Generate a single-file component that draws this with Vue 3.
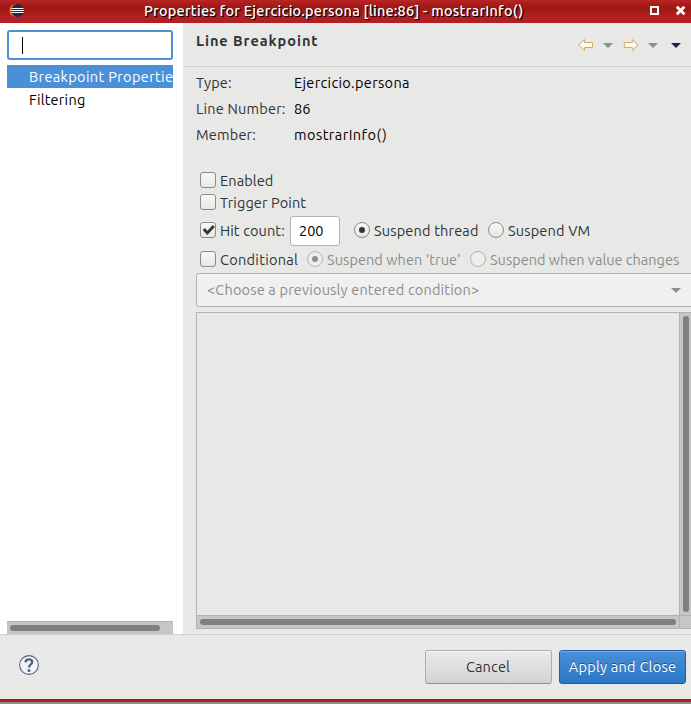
<script setup>
import { ref } from 'vue'

const pages = ['Breakpoint Properties', 'Filtering']
const selected = ref(0)
const info = [
  { label: 'Type:', value: 'Ejercicio.persona', cls: 'v-type', lcls: 'l-type' },
  { label: 'Line Number:', value: '86', cls: 'v-line', lcls: 'l-line' },
  { label: 'Member:', value: 'mostrarInfo()', cls: 'v-member', lcls: 'l-member' }
]
</script>

<template>
  <div class="dialog">
    <header class="titlebar">
      <svg class="logo" width="16" height="16" viewBox="0 0 16 16">
        <circle cx="6.8" cy="7.5" r="6.2" fill="#f7941e" />
        <circle cx="8.4" cy="7.5" r="6.5" fill="#2c2255" />
        <path d="M2.3 5.5h12.2M2 7.5h13M2.3 9.5h12.2" stroke="#fff" stroke-width="1.2" />
      </svg>
      <h1 class="t-title">Properties for Ejercicio.persona [line:86] - mostrarInfo()</h1>
      <svg class="winbtns" width="40" height="16" viewBox="0 0 40 16">
        <rect x="3" y="4" width="7" height="7" fill="none" stroke="#fff" stroke-width="2" />
        <path d="M28.8 3.7l7.6 7.6M36.4 3.7l-7.6 7.6" stroke="#fff" stroke-width="2.8" />
      </svg>
    </header>

    <main class="content">
      <aside class="side">
        <div class="search"><span class="caret"></span></div>
        <ul class="tree">
          <li v-for="(p, i) in pages" :key="p" :class="{ active: i === selected }" @click="selected = i">
            <span :class="'t-nav' + i">{{ p }}</span>
          </li>
        </ul>
        <div class="side-scroll"><span class="thumb"></span></div>
      </aside>

      <section class="page">
        <div class="page-head">
          <h2 class="t-head">Line Breakpoint</h2>
          <svg class="nav" width="108" height="20" viewBox="0 0 108 20">
            <g fill="#fff8e6" stroke="#d0a970" stroke-width="1">
              <path d="M.8 10L6.5 4.5V7.5H14.5V12.5H6.5V15.5Z" />
              <path d="M60 10L54.3 4.5V7.5H46.3V12.5H54.3V15.5Z" />
            </g>
            <path d="M25 8h10l-5 5zM70 8h10l-5 5z" fill="#8b908f" />
            <path d="M93 8h10l-5 5z" fill="#2d1b4b" />
          </svg>
        </div>

        <dl class="info">
          <template v-for="row in info" :key="row.label">
            <dt><span :class="row.lcls">{{ row.label }}</span></dt>
            <dd><span :class="row.cls">{{ row.value }}</span></dd>
          </template>
        </dl>

        <div class="row r-enabled"><i class="check"></i><span class="t-enabled">Enabled</span></div>
        <div class="row r-trigger"><i class="check"></i><span class="t-trigger">Trigger Point</span></div>
        <div class="row r-hit">
          <i class="check">
            <svg width="16" height="16" viewBox="0 0 16 16"><path d="M3.8 7L7.3 11L13.8 4" fill="none" stroke="#2e3436" stroke-width="2.8" /></svg>
          </i>
          <span class="w-hit t-hit">Hit count:</span>
          <div class="count"><span class="t-count">200</span></div>
          <i class="radio on"></i><span class="w-thread t-thread">Suspend thread</span>
          <i class="radio"></i><span class="t-vm">Suspend VM</span>
        </div>
        <div class="row r-cond">
          <i class="check"></i><span class="w-cond t-cond">Conditional</span>
          <i class="radio on off"></i><span class="w-true dim t-true">Suspend when 'true'</span>
          <i class="radio off"></i><span class="dim t-changes">Suspend when value changes</span>
        </div>

        <div class="combo">
          <span class="t-choose">&lt;Choose a previously entered condition&gt;</span>
          <svg width="10" height="5" viewBox="0 0 10 5"><path d="M0 0h10L5 5z" fill="#8b908f" /></svg>
        </div>

        <div class="editor">
          <div class="canvas"></div>
          <div class="vbar"><span></span></div>
          <div class="hbar"><span></span></div>
          <div class="corner"></div>
        </div>
      </section>
    </main>

    <footer class="footer">
      <svg width="22" height="22" viewBox="0 0 22 22">
        <circle cx="11" cy="11" r="9.4" fill="#f4f4f4" stroke="#526388" stroke-width="1.1" />
        <path d="M7.5 8.4C7.6 4.4 14.4 4.5 14.2 8C14.1 10.5 11 10.3 11 13.6" fill="none" stroke="#526388" stroke-width="2.4" />
        <circle cx="11" cy="16.4" r="1.5" fill="#526388" />
      </svg>
      <button class="btn cancel"><span class="t-cancel">Cancel</span></button>
      <button class="btn primary"><span class="t-apply">Apply and Close</span></button>
    </footer>
    <div class="edge"></div>
    <div class="desktop"></div>
  </div>
</template>

<style>
body { margin: 0; overflow: hidden; }
</style>

<style scoped>
* { box-sizing: border-box; }
.dialog {
  width: 691px; height: 704px; overflow: hidden;
  display: flex; flex-direction: column;
  background: #e8e8e6; color: #2e3436;
  font: 14.5px/20px "Ubuntu", "Noto Sans", sans-serif;
  white-space: nowrap;
}
h1, h2, ul, dl, dd { margin: 0; padding: 0; }
.titlebar {
  height: 23px; flex: none; display: flex; align-items: flex-start;
  padding: 3px 3px 0 9px;
  background: linear-gradient(#b82727, #ac1d1b 15%, #9f1710 38%, #b22025 70%, #b22025);
}
.titlebar h1 {
  flex: 1; padding-left: 119px; margin-top: -2px;
  font-size: 14.5px; line-height: 20px; font-weight: 500; color: #fff;
  text-shadow: 1px 1px 1px #000, 1px 1px 0 #3a0808;
}
.winbtns { flex: none; }
.content { height: 611px; flex: none; display: flex; }
.side { width: 184px; flex: none; background: #fff; padding: 7px 10px 0 7px; display: flex; flex-direction: column; border-right: 1px solid #e8e8e6; }
.search { height: 30px; border: 2px solid #4a90d9; border-radius: 3px; padding: 4px 13px; display: flex; }
.caret { width: 1px; height: 17px; margin-top: 1px; background: #000; }
.tree { list-style: none; margin-top: 5px; flex: 1; }
.tree li { height: 23px; line-height: 23px; padding-left: 22px; color: #000; overflow: hidden; }
.tree li.active { background: #4a90d9; color: #fff; }
.side-scroll { height: 13px; background: #c4c7c5; border-top: 1px solid #b0b2b0; padding: 3px; }
.thumb { display: block; width: 150px; height: 6px; border-radius: 3px; background: #7c8180; }
.page { flex: 1; min-width: 0; display: flex; flex-direction: column; }
.page-head { height: 44px; flex: none; border-bottom: 1px solid #cfcfcd; display: flex; justify-content: space-between; padding-left: 12px; }
.page-head h2 { font-size: 14.5px; line-height: 20px; font-weight: 700; margin-top: 8px; }
.nav { margin: 12px 5px 0 0; }
.info { display: grid; grid-template-columns: 98px 1fr; grid-auto-rows: 26px; line-height: 26px; padding: 3px 0 0 12px; }
.info dd { color: #000; }
.row { display: flex; align-items: center; padding-left: 16px; flex: none; }
.r-enabled { height: 22px; margin-top: 21px; }
.r-trigger { height: 22px; }
.r-enabled span, .r-trigger span { padding-top: 2px; }
.r-hit { height: 30px; margin-top: 3px; }
.r-cond { height: 24px; margin-top: 1px; }
.r-cond span { padding-top: 1px; }
.check, .radio {
  flex: none; width: 16px; height: 16px; margin-right: 4px;
  border: 1px solid #8a8c8a; border-radius: 3px;
  background: linear-gradient(#f8f8f8, #e6e6e5);
}
.check svg { display: block; margin: -1px; }
.r-hit .check, .r-hit .radio { margin-bottom: 2px; }
.radio { border-radius: 50%; display: flex; align-items: center; justify-content: center; }
.radio.on::before { content: ""; width: 6px; height: 6px; border-radius: 50%; background: #2e3436; }
.radio.off { border-color: #b3b4b2; background: #eeeeed; }
.radio.off.on::before { background: #8b908f; }
.dim { color: #8b8e8d; }
.w-hit { width: 70px; }
.count { width: 50px; height: 30px; margin-right: 14px; border: 1px solid #b3b4b2; border-radius: 3px; background: #fff; color: #000; padding-left: 8px; line-height: 28px; }
.w-thread { width: 114px; }
.w-cond { width: 87px; }
.w-true { width: 143px; }
.combo {
  height: 34px; margin: 2px -3px 0 12px; flex: none; display: flex; align-items: center; justify-content: space-between;
  padding: 0 12px 0 10px; border: 1px solid #b3b4b2; border-radius: 3px; background: #f0f0f0; color: #8b8e8d;
}
.editor {
  margin: 5px 0 5px 12px; flex: 1; display: grid; grid-template-columns: 1fr 12px; grid-template-rows: 1fr 13px;
  border: 1px solid #b3b4b2; border-right: 0;
}
.vbar { background: #c4c7c5; border-left: 1px solid #b0b2b0; padding: 3px 2px 3px 3px; display: flex; }
.vbar span { width: 6px; border-radius: 3px; background: #7c8180; }
.hbar { background: #c4c7c5; border-top: 1px solid #b0b2b0; padding: 3px; }
.hbar span { display: block; height: 6px; border-radius: 3px; background: #7c8180; }
.corner { background: #c4c7c5; border-left: 1px solid #b0b2b0; border-top: 1px solid #b0b2b0; }
.footer { height: 65px; flex: none; border-top: 1px solid #cfcfcd; display: flex; padding: 15px 5px 0 18px; }
.footer > svg { margin: 4px auto 0 0; }
.btn { width: 127px; height: 34px; font: inherit; color: inherit; padding: 0; border-radius: 3px; }
.cancel { margin-right: 7px; border: 1px solid #adaeac; border-bottom-color: #8f908e; background: linear-gradient(#eaeae9, #d3d3d1); box-shadow: inset 0 1px #f8f8f8; }
.primary { border: 1px solid #1f5b9e; color: #fff; background: linear-gradient(#4a90d9, #2a76c6); box-shadow: inset 0 1px #77adea; text-shadow: 0 -1px #1c5187; }
.edge { height: 3px; flex: none; background: linear-gradient(#a51b17, #b8241f); }
.desktop { flex: 1; background: #8f8b8d; }

/* letter spacing per label */
.t-title { letter-spacing: 0.21px; }
.t-head { letter-spacing: 0.95px; }
.t-nav0 { letter-spacing: 0.36px; }
.t-nav1 { letter-spacing: 0.25px; }
.l-type, .l-line, .l-member { letter-spacing: 0.2px; }
.v-type { letter-spacing: 0.33px; }
.v-member { letter-spacing: 0.46px; }
.t-enabled, .t-trigger, .t-hit { letter-spacing: 0.12px; }
.t-thread, .t-vm { letter-spacing: 0.18px; }
.t-cond { letter-spacing: 0.3px; }
.t-true { letter-spacing: 0.07px; }
.t-choose { letter-spacing: 0.18px; }
.t-cancel { letter-spacing: 0.15px; margin-left: -1px; }
.t-apply { letter-spacing: 0.27px; }
</style>
